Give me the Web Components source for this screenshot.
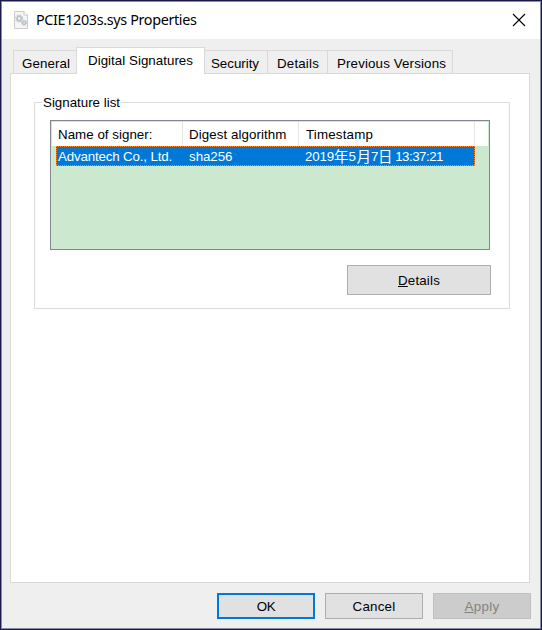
<!DOCTYPE html>
<html lang="en"><head><meta charset="utf-8"><title>PCIE1203s.sys Properties</title>
<style>html,body{margin:0;height:630px;overflow:hidden}body{font:13.33px/16px "Liberation Sans","Noto Sans CJK SC",sans-serif;color:#000}</style></head>
<body><properties-dialog></properties-dialog>
<script>
const define=(name,html,setup)=>customElements.define(name,class extends HTMLElement{
  connectedCallback(){
    if(this.shadowRoot)return;
    this.attachShadow({mode:'open'}).innerHTML=html;
    if(setup)setup(this,this.shadowRoot);
  }
});

/* Text label whose tracking is adjusted to the given width. */
define('ui-label',`<style>:host{display:block;white-space:pre;width:max-content}span{display:inline-block}</style><span><slot></slot></span>`,(el,root)=>{
  const s=root.querySelector('span'),w=+el.getAttribute('w');
  if(w){const n=el.textContent.length;s.style.letterSpacing=((w-s.getBoundingClientRect().width)/n)+'px';}
});

define('file-icon',`<style>:host{display:block;width:14px;height:18px}svg{display:block}</style>
<svg width="14" height="18" viewBox="0 0 14 18"><path d="M.5.5h9.5l3.5 3.5v13.5H.5z" fill="#f5f5f5" stroke="#cbcbcb"/><path d="M10 .5V4h3.5" fill="#fff" stroke="#cbcbcb"/>
<g fill="none" stroke="#bcc3c8"><circle cx="5.2" cy="7.6" r="2.2" stroke-width="1.8"/><circle cx="5.2" cy="7.6" r="3.5" stroke-width="1.1" stroke-dasharray="1.45 1.3"/><circle cx="10.2" cy="11.8" r="1.6" stroke-width="1.6"/><circle cx="10.2" cy="11.8" r="2.6" stroke-width="1" stroke-dasharray="1.15 .89"/></g></svg>`);

define('title-bar',`<style>:host{display:flex;height:37px;box-sizing:border-box;background:#fff;padding:9px 14px 0 12px}
.t{font:14.4px/20px "Noto Sans",sans-serif;margin:-1px auto 0 8px}svg{display:block;margin-top:2px}</style>
<file-icon></file-icon><ui-label class="t" w="160.5">PCIE1203s.sys Properties</ui-label>
<svg width="14" height="14" viewBox="0 0 14 14"><path d="M1 1l12 12M13 1L1 13" stroke="#000" stroke-width="1.1"/></svg>`);

define('tab-item',`<style>:host{display:block;box-sizing:border-box;height:23px;border:1px solid #d9d9d9;border-width:1px 1px 0 0;padding:5px 0 0 var(--pad);background:#efefef}
:host([first]){border-left-width:1px}
:host([selected]){height:27px;background:#fff;border-left-width:1px;margin-bottom:-1px;z-index:1}</style><slot></slot>`);

define('tab-strip',`<style>:host{display:flex;align-items:flex-end;height:26px;padding-left:3px}</style>
<tab-item first style="width:63px;--pad:8px;border-right:0"><ui-label w="48">General</ui-label></tab-item>
<tab-item selected style="width:129px;--pad:11px"><ui-label w="105">Digital Signatures</ui-label></tab-item>
<tab-item style="width:63px;--pad:6px"><ui-label w="48">Security</ui-label></tab-item>
<tab-item style="width:60px;--pad:9px"><ui-label w="42">Details</ui-label></tab-item>
<tab-item style="width:125px;--pad:9px"><ui-label w="109">Previous Versions</ui-label></tab-item>`);

define('push-button',`<style>:host{display:flex;box-sizing:border-box;width:98px;height:26px;align-items:center;justify-content:center;background:#e1e1e1;border:1px solid #adadad;padding-top:1px}
:host([default]){border:2px solid #0078d7}
:host([disabled]){background:#ccc;border-color:#bfbfbf;color:#838383}</style><slot></slot>`);

define('signature-table',`<style>:host{display:block;box-sizing:border-box;width:440px;height:130px;border:1px solid #828790;background:#cce8cf;padding:1px}
.h,.r{display:grid;box-sizing:border-box}
.h{height:24px;background:#fff;grid-template-columns:131px 116px 176px 1fr}
.h>div{border-right:1px solid #e5e5e5;padding:5px 0 0 6px}.h>div:last-child{border:0}
.r{position:relative;width:419px;height:20px;margin-left:4px;background:#0078d7;color:#fff;grid-template-columns:131px 116px 172px;padding:3px 0 0 2px}
svg{position:absolute;left:0;top:0}
.d{display:flex}.c{font:14.5px/16px "Noto Sans CJK SC",sans-serif;font-weight:400;position:relative;top:-1px}</style>
<div class="h"><div><ui-label w="94.5">Name of signer:</ui-label></div><div><ui-label w="97.5">Digest algorithm</ui-label></div><div style="padding-left:7px"><ui-label w="67">Timestamp</ui-label></div><div></div></div>
<div class="r"><ui-label w="114">Advantech Co., Ltd.</ui-label><ui-label w="43.5">sha256</ui-label>
<div class="d"><ui-label w="29">2019</ui-label><ui-label class="c" w="14.5">年</ui-label><ui-label w="8">5</ui-label><ui-label class="c" w="14.5">月</ui-label><ui-label w="7">7</ui-label><ui-label class="c" w="14">日</ui-label><ui-label w="51"> 13:37:21</ui-label></div>
<svg width="419" height="20"><path d="M0 .5H419M0 19.5H419M.5 0V20M418.5 0V20" fill="none" stroke="#ff8728" stroke-dasharray="1 1"/></svg></div>`);

define('group-box',`<style>:host{display:block;box-sizing:border-box;width:476px;height:207px;border:1px solid #dcdcdc;padding:0 18px 0 15px}
.l{background:#fff;margin:-8px 0 8px -8px;padding:0 1px}
push-button{width:144px;height:30px;margin:15px 0 0 auto}.list{padding-top:1px}</style>
<ui-label class="l" w="77">Signature list</ui-label><div class="list"><signature-table></signature-table></div><push-button><ui-label w="42"><u>D</u>etails</ui-label></push-button>`);

define('properties-dialog',`<style>:host{display:block;box-sizing:border-box;width:542px;height:630px;background:#efefef;border:1px solid #1b1a50}
.f{box-sizing:border-box;width:540px;height:628px;border:1px solid #8d8c98}
.tabs{padding:8px 0 0 8px}.page{box-sizing:border-box;margin-left:8px;width:520px;height:510px;border:1px solid #d9d9d9;background:#fff;padding:28px 0 0 23px}
.actions{display:flex;justify-content:flex-end;gap:10px;padding:10px 9px 0}</style>
<div class="f"><title-bar></title-bar><div class="tabs"><tab-strip></tab-strip></div><div class="page"><group-box></group-box></div>
<div class="actions"><push-button default><ui-label w="18.5">OK</ui-label></push-button><push-button><ui-label w="43">Cancel</ui-label></push-button><push-button disabled><ui-label w="35"><u>A</u>pply</ui-label></push-button></div></div>`);
</script></body></html>
